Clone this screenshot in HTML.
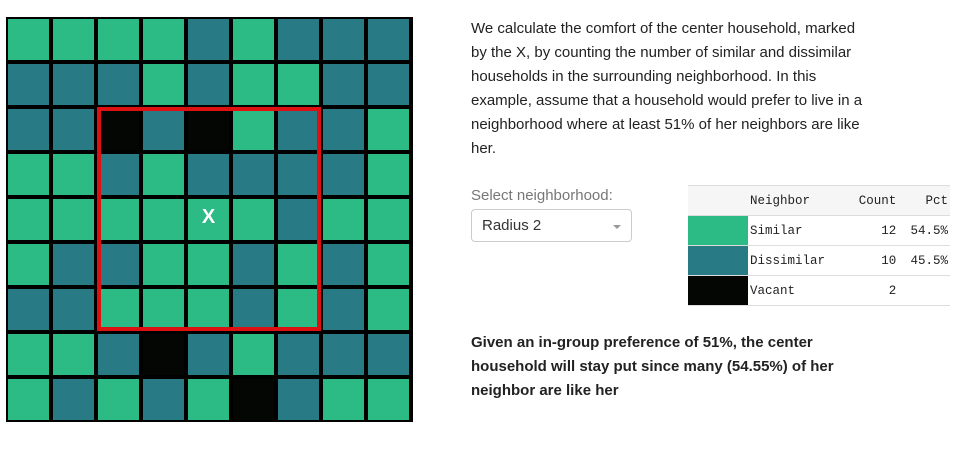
<!DOCTYPE html>
<html><head><style>
body{margin:0;width:964px;height:450px;background:#fff;position:relative;font-family:"Liberation Sans",sans-serif;overflow:hidden}
#grid{position:absolute;left:6px;top:17px;width:407px;height:405px;background:#000}
.c{position:absolute;width:41px;height:41px}
.G{background:#2cbb84}.T{background:#287b84}.B{background:#030603}
#red{position:absolute;left:97px;top:107px;width:216px;height:216px;border:4px solid #dd1111}
#x{position:absolute;left:188px;top:197px;width:41px;height:41px;color:#fff;font-weight:bold;font-size:20px;text-align:center;line-height:41px}
p.t{position:absolute;left:471px;top:17px;width:480px;margin:0;font-size:15px;line-height:24px;color:#222;white-space:nowrap}
.lab{position:absolute;left:471px;top:187px;font-size:15px;color:#777}
.sel{position:absolute;left:471px;top:209px;width:161px;height:33px;border:1px solid #ccc;border-radius:4px;box-sizing:border-box;font-size:15px;color:#333;padding:7px 10px}
.sel:after{content:"";position:absolute;right:10px;top:15px;border:4px solid transparent;border-top:4px solid #999}
table{position:absolute;left:688px;top:185px;width:262px;border-collapse:collapse;font-family:"Liberation Mono",monospace;font-size:12.5px;color:#222}
td{height:29px;border-bottom:1px solid #ddd;padding:0 2px}
tr.h td{background:#f6f6f6;border-top:1px solid #ddd}
.r{text-align:right}
b.bt{position:absolute;left:471px;top:331px;width:420px;font-size:15px;line-height:24px;color:#222}
</style></head><body>
<div id="grid"></div>
<div id="red"></div>
<div id="x">X</div>
<p class="t">We calculate the comfort of the center household, marked<br>by the X, by counting the number of similar and dissimilar<br>households in the surrounding neighborhood. In this<br>example, assume that a household would prefer to live in a<br>neighborhood where at least 51% of her neighbors are like<br>her.</p>
<div class="lab">Select neighborhood:</div>
<div class="sel">Radius 2</div>
<table>
<tr class="h"><td style="width:56px"></td><td>Neighbor</td><td class="r">Count</td><td class="r">Pct</td></tr>
<tr><td class="G"></td><td>Similar</td><td class="r">12</td><td class="r">54.5%</td></tr>
<tr><td class="T"></td><td>Dissimilar</td><td class="r">10</td><td class="r">45.5%</td></tr>
<tr><td class="B"></td><td>Vacant</td><td class="r">2</td><td></td></tr>
</table>
<b class="bt">Given an in-group preference of 51%, the center<br>household will stay put since many (54.55%) of her<br>neighbor are like her</b>
<script>
var rows=["GGGGTGTTT","TTTGTGGTT","TTBTBGTTG","GGTGTTTTG","GGGGGGTGG","GTTGGTGTG","TTGGGTGTG","GGTBTGTTT","GTGTGBTGG"];
var g=document.getElementById('grid'),h='';
rows.forEach(function(r,i){for(var j=0;j<9;j++)h+='<div class="c '+r[j]+'" style="left:'+(2+45*j)+'px;top:'+(2+45*i)+'px"></div>';});
g.innerHTML=h;
</script>
</body></html>
